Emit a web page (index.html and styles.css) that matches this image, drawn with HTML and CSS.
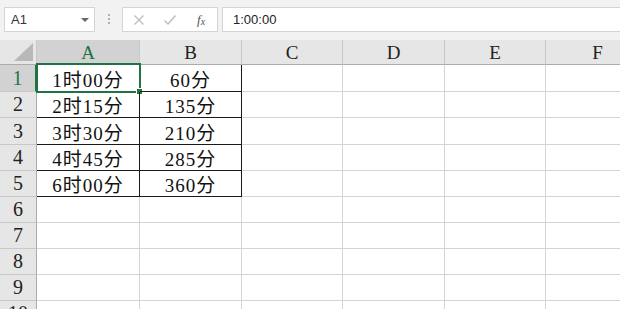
FILE: index.html
```html
<!DOCTYPE html>
<html lang="zh-CN">
<head>
    <meta charset="UTF-8">
    <title>Sheet1</title>
    <link rel="stylesheet" href="styles.css">
</head>
<body>
    <div class="toolbar">
        <div class="name-box">
            <span>A1</span>
            <span class="drop"></span>
        </div>
        <div class="grip">
            <span></span><span></span><span></span>
        </div>
        <div class="fx-buttons">
            <svg class="ico" width="12" height="12" viewBox="0 0 12 12"><path d="M1.5 1.5 L10.5 10.5 M10.5 1.5 L1.5 10.5" stroke="#bdbdbd" stroke-width="1.3" fill="none"/></svg>
            <svg class="ico" width="14" height="12" viewBox="0 0 14 12"><path d="M1.5 6.5 L5 10 L12.5 1.5" stroke="#bdbdbd" stroke-width="1.4" fill="none"/></svg>
            <span class="fx">f<sub>x</sub></span>
        </div>
        <div class="formula">1:00:00</div>
    </div>

    <div class="sheet">
        <div class="corner"><span class="tri"></span></div>
        <div class="col-head active">A</div>
        <div class="col-head">B</div>
        <div class="col-head">C</div>
        <div class="col-head">D</div>
        <div class="col-head">E</div>
        <div class="col-head">F</div>

        <div class="row-head active">1</div>
        <div class="cell data selected">1时00分<span class="sel"><i></i></span></div>
        <div class="cell data">60分</div>
        <div class="cell"></div><div class="cell"></div><div class="cell"></div><div class="cell"></div>

        <div class="row-head">2</div>
        <div class="cell data">2时15分</div>
        <div class="cell data">135分</div>
        <div class="cell"></div><div class="cell"></div><div class="cell"></div><div class="cell"></div>

        <div class="row-head">3</div>
        <div class="cell data">3时30分</div>
        <div class="cell data">210分</div>
        <div class="cell"></div><div class="cell"></div><div class="cell"></div><div class="cell"></div>

        <div class="row-head">4</div>
        <div class="cell data">4时45分</div>
        <div class="cell data">285分</div>
        <div class="cell"></div><div class="cell"></div><div class="cell"></div><div class="cell"></div>

        <div class="row-head">5</div>
        <div class="cell data">6时00分</div>
        <div class="cell data">360分</div>
        <div class="cell"></div><div class="cell"></div><div class="cell"></div><div class="cell"></div>

        <div class="row-head">6</div>
        <div class="cell"></div><div class="cell"></div><div class="cell"></div><div class="cell"></div><div class="cell"></div><div class="cell"></div>
        <div class="row-head">7</div>
        <div class="cell"></div><div class="cell"></div><div class="cell"></div><div class="cell"></div><div class="cell"></div><div class="cell"></div>
        <div class="row-head">8</div>
        <div class="cell"></div><div class="cell"></div><div class="cell"></div><div class="cell"></div><div class="cell"></div><div class="cell"></div>
        <div class="row-head">9</div>
        <div class="cell"></div><div class="cell"></div><div class="cell"></div><div class="cell"></div><div class="cell"></div><div class="cell"></div>
        <div class="row-head">10</div>
        <div class="cell"></div><div class="cell"></div><div class="cell"></div><div class="cell"></div><div class="cell"></div><div class="cell"></div>
    </div>
</body>
</html>
```

FILE: styles.css
```css
/* Base */
body {
    margin: 0;
    width: 620px;
    height: 309px;
    overflow: hidden;
    background: #f2f2f2;
    font-family: 'Liberation Serif', 'Noto Sans CJK SC', serif;
    color: #222;
}

/* Formula bar row */
.toolbar {
    display: flex;
    align-items: flex-start;
    height: 40px;
    padding: 7px 0 0 4px;
    box-sizing: border-box;
    font-family: 'Liberation Sans', 'Noto Sans CJK SC', sans-serif;
}

.name-box {
    display: flex;
    align-items: center;
    justify-content: space-between;
    width: 91px;
    height: 25px;
    box-sizing: border-box;
    padding: 0 5px 0 6px;
    background: #fff;
    border: 1px solid #d4d4d4;
    font-size: 13px;
    color: #333;
}

.drop {
    width: 0;
    height: 0;
    border-left: 4px solid transparent;
    border-right: 4px solid transparent;
    border-top: 4px solid #666;
}

.grip {
    display: flex;
    flex-direction: column;
    gap: 2px;
    width: 27px;
    padding-top: 7px;
    align-items: center;
}

.grip span {
    width: 2px;
    height: 2px;
    background: #b0b0b0;
}

.fx-buttons {
    display: flex;
    align-items: center;
    width: 96px;
    height: 25px;
    box-sizing: border-box;
    background: #fff;
    border: 1px solid #d4d4d4;
    padding-left: 10px;
    gap: 18px;
}

.fx {
    font-family: 'Liberation Serif', serif;
    font-style: italic;
    font-size: 13px;
    color: #555;
    margin-left: 2px;
}

.fx sub {
    font-size: 10px;
    vertical-align: -1px;
}

.formula {
    flex: 1;
    height: 25px;
    box-sizing: border-box;
    margin-left: 4px;
    margin-right: -2px;
    padding: 0 10px;
    line-height: 23px;
    background: #fff;
    border: 1px solid #d4d4d4;
    font-size: 13px;
    color: #222;
}

/* Sheet grid */
.sheet {
    display: grid;
    grid-template-columns: 37px 103px 102px 101px 102px 101px 104px;
    grid-template-rows: 25px 27px 26px 27px 26px 26px 26px 26px 26px 26px 26px;
    background: #fff;
}

.corner {
    display: flex;
    align-items: flex-end;
    justify-content: flex-end;
    padding: 0 3px 3px 0;
    background: #e6e6e6;
    border-right: 1px solid #c8c8c8;
    border-bottom: 1px solid #ababab;
}

.tri {
    width: 19px;
    height: 18px;
    background: #b8b8b8;
    clip-path: polygon(100% 0, 100% 100%, 0 100%);
}

.col-head {
    display: flex;
    align-items: center;
    justify-content: center;
    background: #e6e6e6;
    border-right: 1px solid #c8c8c8;
    border-bottom: 1px solid #ababab;
    font-size: 19px;
    padding-top: 2px;
    box-sizing: border-box;
}

.col-head.active {
    background: #d2d2d2;
    color: #217346;
    border-bottom: 2px solid #217346;
}

.row-head {
    display: flex;
    align-items: center;
    justify-content: center;
    background: #e6e6e6;
    border-right: 1px solid #ababab;
    border-bottom: 1px solid #c8c8c8;
    font-size: 20px;
}

.row-head.active {
    background: #d2d2d2;
    color: #217346;
    border-right: 2px solid #217346;
}

.cell {
    position: relative;
    display: flex;
    align-items: center;
    justify-content: center;
    border-right: 1px solid #d4d4d4;
    border-bottom: 1px solid #d4d4d4;
    font-size: 19px;
    letter-spacing: 1px;
    color: #111;
}

.cell.data {
    border-right-color: #1a1a1a;
    border-bottom-color: #1a1a1a;
}

/* Active cell outline */
.sel {
    position: absolute;
    left: -1px;
    top: -2px;
    right: -2px;
    bottom: -2px;
    border: 2px solid #217346;
}

.sel i {
    position: absolute;
    right: -4px;
    bottom: -4px;
    width: 5px;
    height: 5px;
    background: #217346;
    border: 1px solid #fff;
}
```
